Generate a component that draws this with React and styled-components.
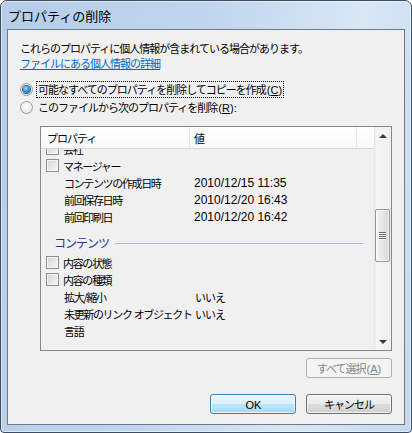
import styled, { createGlobalStyle } from 'styled-components'

const GlobalStyle = createGlobalStyle`
  html, body { margin: 0; padding: 0; background: #ffffff; }
  body {
    font-family: "Noto Sans CJK JP", "Liberation Sans", sans-serif;
    font-size: 11px;
    letter-spacing: -1px;
    color: #000;
  }
  * { box-sizing: border-box; }
`

const Window = styled.div`
  width: 412px;
  height: 433px;
  border: 1px solid #3b4d61;
  border-radius: 7px 7px 4px 4px;
  background: linear-gradient(100deg, #b5cde8 0%, #c1d6ee 45%, #d9e7f5 75%, #c4d9ef 100%);
  box-shadow: inset 0 0 0 1px rgba(255, 255, 255, 0.55);
  display: flex;
  flex-direction: column;
  padding: 0 6px 7px 6px;
`

const TitleBar = styled.div`
  height: 28px;
  display: flex;
  align-items: center;
  padding-left: 1px;
  font-size: 13px;
  letter-spacing: 0;
`

const Client = styled.div`
  flex: 1;
  border: 1px solid #6a7b8d;
  background: #f0f0f0;
  display: flex;
  flex-direction: column;
`

const Intro = styled.div`
  padding: 11px 0 0 12px;
  line-height: 15px;
`

const Link = styled.a`
  color: #0066cc;
  text-decoration: underline;
`

// keyboard accelerator such as (C): latin glyphs at normal spacing
const Key = styled.span`
  font-family: "Liberation Sans", sans-serif;
  letter-spacing: 0;
  margin-left: 1px;
`

const RadioGroup = styled.div`
  margin: 9px 0 0 12px;
  display: flex;
  flex-direction: column;
`

const RadioRow = styled.label`
  height: 18px;
  display: flex;
  align-items: center;
  gap: 3px;
`

const RadioDot = styled.span`
  width: 13px;
  height: 13px;
  border-radius: 50%;
  border: 1px solid #9a9a9a;
  background: radial-gradient(circle at 50% 40%, #ffffff 0%, #eeeeee 55%, #d4d4d4 100%);
  display: grid;
  place-items: center;
  &::after {
    content: "";
    width: 7px;
    height: 7px;
    border-radius: 50%;
    display: ${p => (p.$checked ? 'block' : 'none')};
    background: radial-gradient(circle at 40% 35%, #a6dcf8 0%, #2f8fd0 50%, #175a99 100%);
    box-shadow: 0 0 0 1px #1d5f98;
  }
`

const RadioText = styled.span`
  line-height: 14px;
  padding: 0 1px;
  border: 1px dotted ${p => (p.$focused ? '#000' : 'transparent')};
`

const ListBox = styled.div`
  margin: 10px 12px 0 32px;
  height: 225px;
  border: 1px solid #828790;
  display: flex;
`

const ListMain = styled.div`
  flex: 1;
  display: flex;
  flex-direction: column;
  overflow: hidden;
`

const Header = styled.div`
  height: 22px;
  flex: none;
  display: flex;
  background: linear-gradient(#ffffff, #f8f9fa);
  border-bottom: 1px solid #d5d5d5;
`

const HeaderCell = styled.div`
  width: ${p => p.$w}px;
  flex: ${p => (p.$fill ? 1 : 'none')};
  padding-left: ${p => p.$pad}px;
  display: flex;
  align-items: center;
  border-right: ${p => (p.$fill ? 'none' : '1px solid #e3e6ea')};
`

const Body = styled.div`
  flex: 1;
  overflow: hidden;
`

const BodyInner = styled.div`
  margin-top: -9px;
`

const Row = styled.div`
  height: 17px;
  display: flex;
  align-items: center;
`

const NameCell = styled.div`
  width: 149px;
  flex: none;
  display: flex;
  align-items: center;
  gap: 4px;
  padding-left: ${p => (p.$check ? 5 : 23)}px;
  white-space: pre;
  letter-spacing: -1.35px;
  word-spacing: 1px;
`

const ValueCell = styled.div`
  padding-left: 5px;
  white-space: nowrap;
  ${p =>
    p.$num &&
    `
    padding-left: 4px;
    font-family: "Liberation Sans", sans-serif;
    font-size: 12px;
    letter-spacing: 0;
  `}
`

const CheckBox = styled.span`
  width: 13px;
  height: 13px;
  flex: none;
  border: 1px solid #8f8f8f;
  box-shadow: inset 0 0 0 1px #f4f4f4;
  background: linear-gradient(135deg, #d2d2d2 0%, #e9e9e9 60%, #f6f6f6 100%);
`

const GroupHeader = styled.div`
  height: 29px;
  padding: 9px 11px 0 13px;
  display: flex;
  align-items: flex-start;
  color: #1e3b8c;
  font-size: 12px;
  line-height: 17px;
  &::after {
    content: "";
    flex: 1;
    height: 1px;
    margin: 9px 0 0 6px;
    background: #a9b8d6;
  }
`

const ScrollBar = styled.div`
  width: 17px;
  flex: none;
  display: flex;
  flex-direction: column;
  background: linear-gradient(90deg, #e2e2e2 0, #f5f5f5 2px, #efefef 100%);
`

const ArrowButton = styled.div`
  height: 17px;
  flex: none;
  display: grid;
  place-items: center;
  &::after {
    content: "";
    width: 0;
    height: 0;
    border-left: 4px solid transparent;
    border-right: 4px solid transparent;
    ${p => (p.$down ? 'border-top: 4px solid #3d3d3d;' : 'border-bottom: 4px solid #3d3d3d;')}
  }
`

const TrackGap = styled.div`
  height: ${p => (p.$h ? `${p.$h}px` : 'auto')};
  flex: ${p => (p.$h ? 'none' : 1)};
`

const Thumb = styled.div`
  height: 53px;
  flex: none;
  margin: 0 1px;
  border: 1px solid #979797;
  border-radius: 2px;
  background: linear-gradient(90deg, #f4f4f4 0%, #e8e8e8 50%, #d8d8d8 100%);
  box-shadow: inset 0 0 0 1px rgba(255, 255, 255, 0.7);
  display: grid;
  place-items: center;
`

const Grip = styled.div`
  width: 7px;
  height: 8px;
  background: repeating-linear-gradient(#6a6a6a 0 1px, #f8f8f8 1px 2px);
`

const ButtonRow = styled.div`
  margin: ${p => p.$top}px 12px 0 0;
  display: flex;
  justify-content: flex-end;
  gap: 10px;
`

const Button = styled.button`
  width: 86px;
  height: 20px;
  padding: 0;
  font: inherit;
  letter-spacing: inherit;
  line-height: 18px;
  border-radius: 3px;
  color: ${p => (p.$disabled ? '#838383' : '#000')};
  border: 1px solid ${p => (p.$default ? '#3c7fb1' : p.$disabled ? '#adb2b5' : '#707070')};
  background: ${p =>
    p.$default
      ? 'linear-gradient(#eaf6fd 0%, #d9f0fc 50%, #bee6fd 50%, #a7d9f5 100%)'
      : p.$disabled
      ? '#f4f4f4'
      : 'linear-gradient(#f2f2f2 0%, #ebebeb 50%, #dddddd 50%, #cfcfcf 100%)'};
  box-shadow: inset 0 0 0 1px ${p => (p.$disabled ? 'transparent' : 'rgba(255, 255, 255, 0.7)')};
`

const rowsTop = [
  { name: '会社', check: true },
  { name: 'マネージャー', check: true },
  { name: 'コンテンツの作成日時', value: '2010/12/15 11:35', num: true },
  { name: '前回保存日時', value: '2010/12/20 16:43', num: true },
  { name: '前回印刷日', value: '2010/12/20 16:42', num: true },
]

const rowsContent = [
  { name: '内容の状態', check: true },
  { name: '内容の種類', check: true },
  { name: '拡大/縮小', value: 'いいえ' },
  { name: '未更新のリンク オブジェクト', value: 'いいえ' },
  { name: '言語' },
]

const PropRow = ({ name, value, check, num }) => (
  <Row>
    <NameCell $check={check}>
      {check && <CheckBox />}
      {name}
    </NameCell>
    {value && <ValueCell $num={num}>{value}</ValueCell>}
  </Row>
)

export default function App() {
  return (
    <>
      <GlobalStyle />
      <Window>
        <TitleBar>プロパティの削除</TitleBar>
        <Client>
          <Intro>
            <div>これらのプロパティに個人情報が含まれている場合があります。</div>
            <Link>ファイルにある個人情報の詳細</Link>
          </Intro>
          <RadioGroup>
            <RadioRow>
              <RadioDot $checked />
              <RadioText $focused>
                可能なすべてのプロパティを削除してコピーを作成<Key>(<u>C</u>)</Key>
              </RadioText>
            </RadioRow>
            <RadioRow>
              <RadioDot />
              <RadioText>
                このファイルから次のプロパティを削除<Key>(<u>R</u>):</Key>
              </RadioText>
            </RadioRow>
          </RadioGroup>
          <ListBox>
            <ListMain>
              <Header>
                <HeaderCell $w={149} $pad={6}>プロパティ</HeaderCell>
                <HeaderCell $w={167} $pad={4}>値</HeaderCell>
                <HeaderCell $fill />
              </Header>
              <Body>
                <BodyInner>
                  {rowsTop.map(r => <PropRow key={r.name} {...r} />)}
                  <GroupHeader>コンテンツ</GroupHeader>
                  {rowsContent.map(r => <PropRow key={r.name} {...r} />)}
                  <GroupHeader>ファイル</GroupHeader>
                </BodyInner>
              </Body>
            </ListMain>
            <ScrollBar>
              <ArrowButton />
              <TrackGap $h={65} />
              <Thumb><Grip /></Thumb>
              <TrackGap />
              <ArrowButton $down />
            </ScrollBar>
          </ListBox>
          <ButtonRow $top={7}>
            <Button $disabled>すべて選択<Key>(<u>A</u>)</Key></Button>
          </ButtonRow>
          <ButtonRow $top={16}>
            <Button $default><Key>OK</Key></Button>
            <Button>キャンセル</Button>
          </ButtonRow>
        </Client>
      </Window>
    </>
  )
}
